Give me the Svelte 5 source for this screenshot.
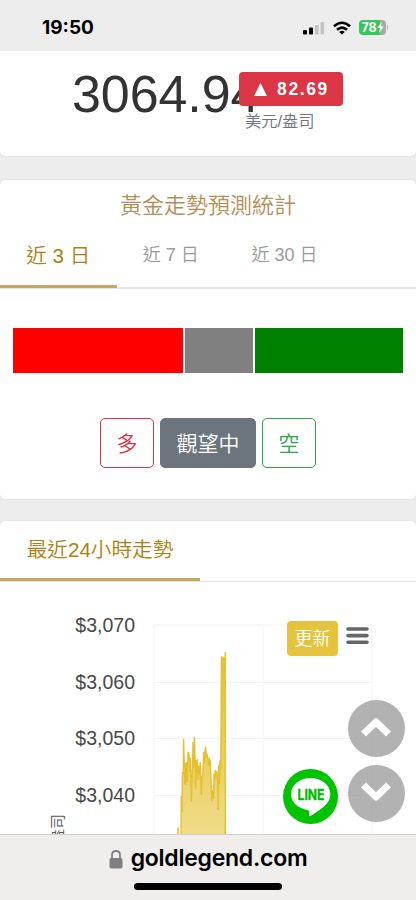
<script>
  const tabs = ['近 3 日', '近 7 日', '近 30 日'];
  let activeTab = 0;

  const segments = [
    { name: 'long', value: 170.5 },
    { name: 'wait', value: 69 },
    { name: 'short', value: 148.5 }
  ];

  const ticks = [
    { label: '$3,070', y: 43 },
    { label: '$3,060', y: 100.5 },
    { label: '$3,050', y: 156.5 },
    { label: '$3,040', y: 213.5 }
  ];

  const columns = [154, 263, 372];

  // price line, in chart units
  const prices = [
    [181, 258], [181.3, 214], [182, 230], [182.4, 190], [183.2, 192], [183.6, 157],
    [184.3, 182], [184.8, 202], [185.4, 181], [186, 203], [186.6, 180], [187.4, 200],
    [188, 170.5], [188.8, 171], [189.4, 178], [190, 190], [190.5, 176], [191.3, 220],
    [192, 199], [192.6, 184], [193, 160], [193.7, 186], [194.4, 154.5], [195, 175],
    [195.6, 207], [196.2, 178], [196.8, 190], [197.4, 177], [198.2, 198], [199, 184],
    [199.6, 193], [200.3, 180], [201.3, 213], [202, 197], [203, 190], [203.6, 170],
    [204.4, 182], [204.9, 169], [205.7, 165], [206.3, 176], [207, 172], [207.8, 176],
    [208.6, 184], [209.4, 177], [210.3, 179], [210.8, 193], [211.4, 203], [212, 219],
    [212.8, 208], [213.4, 217], [214, 192], [214.7, 198], [215.3, 188], [216, 195],
    [216.8, 189], [217.6, 200], [218.2, 228], [218.8, 183], [219.4, 202], [220, 178],
    [220.8, 188], [221.4, 75], [222.5, 76], [224, 76], [225, 90], [225.3, 70], [225.3, 258]
  ];

  const line = prices.map((p) => p.join(',')).join(' ');
</script>

<div class="phone">
  <header class="status">
    <span class="clock">19:50</span>
    <div class="status-icons">
      <svg width="22" height="14" viewBox="0 0 22 14" aria-hidden="true">
        <rect x="0" y="9" width="4" height="4.5" rx="1" />
        <rect x="6" y="6.5" width="4" height="7" rx="1" />
        <rect x="12" y="4" width="3.6" height="9.5" rx="1" fill="#c3c3c3" />
        <rect x="17.5" y="1" width="3.6" height="12.5" rx="1" fill="#c3c3c3" />
      </svg>
      <svg width="18" height="14" viewBox="0 0 18 14" fill="none" stroke="#000" stroke-width="2.6" aria-hidden="true">
        <path d="M1 5.3Q9-1.8 17 5.3" />
        <path d="M4 8.8Q9 4.4 14 8.8" />
        <path d="M9 13.6L6.2 10.9Q9 8.7 11.8 10.9Z" fill="#000" stroke="none" />
      </svg>
      <div class="battery">
        <span>78</span>
        <svg width="7" height="11" viewBox="0 0 7 11" aria-hidden="true">
          <path d="M4.5 0L.3 6H3L2 11L6.7 4.6H4Z" fill="#fff" />
        </svg>
      </div>
    </div>
  </header>

  <main>
    <section class="card price-card">
      <div class="price">3064.94</div>
      <div class="change">
        <span class="badge">
          <svg width="13" height="13" viewBox="0 0 13 13" aria-hidden="true">
            <path d="M6.5 0L13 13H0Z" fill="#fff" />
          </svg>
          82.69
        </span>
        <span class="unit">美元/盎司</span>
      </div>
    </section>

    <section class="card stats-card">
      <h2>黃金走勢預測統計</h2>
      <nav class="tabs">
        {#each tabs as tab, index (tab)}
          <button type="button" class="tab" class:active={index === activeTab} on:click={() => (activeTab = index)}>
            {tab}
          </button>
        {/each}
      </nav>
      <div class="ratio">
        {#each segments as segment (segment.name)}
          <div class={segment.name} style="flex-grow: {segment.value}"></div>
        {/each}
      </div>
      <div class="votes">
        <button type="button" class="vote red">多</button>
        <button type="button" class="vote grey">觀望中</button>
        <button type="button" class="vote green">空</button>
      </div>
    </section>

    <section class="card chart-card">
      <nav class="chart-tabs">
        <button type="button" class="chart-tab">最近24小時走勢</button>
      </nav>
      <div class="chart">
        <svg width="416" height="258" viewBox="0 0 416 258">
          <defs>
            <linearGradient id="gold" gradientUnits="userSpaceOnUse" x1="0" y1="70" x2="0" y2="258">
              <stop offset="0" stop-color="#e6c02e" />
              <stop offset="1" stop-color="#f0dc8c" />
            </linearGradient>
          </defs>
          <g stroke="#f3f3f3">
            {#each columns as x}
              <line x1={x} x2={x} y1="43" y2="258" />
            {/each}
            {#each ticks as tick}
              <line x1="154" x2="372" y1={tick.y} y2={tick.y} />
            {/each}
          </g>
          {#each ticks as tick}
            <text class="tick" x="135" y={tick.y + 6.5}>{tick.label}</text>
          {/each}
          <text class="axis" transform="translate(62.5 262) rotate(-90)">盎司</text>
          <polygon points="181,258 {line}" fill="url(#gold)" />
          <polyline points={line} fill="none" stroke="#e6c02e" stroke-width="1.4" />
          <path d="M178 258V245.5" stroke="#e6c02e" stroke-width="1.6" />
        </svg>
        <div class="tools">
          <button type="button" class="refresh">更新</button>
          <svg width="23" height="18" viewBox="0 0 23 18" stroke="#666" stroke-width="3.6" stroke-linecap="round" aria-hidden="true">
            <path d="M2 2H21M2 8.6H21M2 15.2H21" />
          </svg>
        </div>
      </div>
    </section>

    <div class="floating">
      <svg class="line-logo" width="55" height="55" viewBox="0 0 55 55">
        <circle cx="27.5" cy="27.5" r="27.5" fill="#00c300" />
        <path d="M27.5 9C16.5 9 8 16 8 25.2C8 33.6 15.5 39.4 24.5 41C26.5 41.5 26.5 42.5 26 46.5C26 47.3 26.7 47.3 27.3 46.9C33 43.7 40 39 43.8 34.5C46 31.8 47.3 28.8 47.3 25.2C47.3 16 38.5 9 27.5 9Z" fill="#fff" />
        <text x="28" y="30.5" text-anchor="middle" textLength="27" lengthAdjust="spacingAndGlyphs">LINE</text>
      </svg>
      <div class="scrollers">
        <button type="button" aria-label="Up">
          <svg width="32" height="22" viewBox="0 0 32 22" aria-hidden="true">
            <path d="M3.5 18L16 6L28.5 18" />
          </svg>
        </button>
        <button type="button" aria-label="Down">
          <svg width="32" height="22" viewBox="0 0 32 22" aria-hidden="true">
            <path d="M3.5 4L16 16L28.5 4" />
          </svg>
        </button>
      </div>
    </div>
  </main>

  <footer>
    <div class="address">
      <svg width="14" height="19" viewBox="0 0 14 19" aria-hidden="true">
        <path d="M3 9V5Q3 1 7 1T11 5V9" fill="none" stroke="#808082" stroke-width="1.8" />
        <rect x="0.5" y="8" width="13" height="10.6" rx="1.8" fill="#808082" />
      </svg>
      <span>goldlegend.com</span>
    </div>
    <div class="home-bar"></div>
  </footer>
</div>

<style>
  :global(body) {
    margin: 0;
    background: #ededed;
  }

  .phone {
    width: 416px;
    height: 900px;
    display: flex;
    flex-direction: column;
    overflow: hidden;
    background: #ededed;
    font-family: "Liberation Sans", "Noto Sans CJK TC", sans-serif;
    font-weight: 350;
    color: #333;
  }

  button {
    font: inherit;
    margin: 0;
    padding: 0;
    border: 0;
    background: none;
    box-sizing: border-box;
    white-space: nowrap;
  }

  svg {
    display: block;
    flex: none;
  }

  /* STATUS BAR */
  .status {
    flex: none;
    height: 51px;
    box-sizing: border-box;
    padding: 4px 28px 0 42px;
    display: flex;
    align-items: center;
    justify-content: space-between;
  }

  .clock {
    font-family: Inter, sans-serif;
    font-size: 19px;
    font-weight: 700;
    color: #000;
  }

  .status-icons {
    display: flex;
    align-items: center;
    gap: 8px;
  }

  .battery {
    position: relative;
    width: 27px;
    height: 15px;
    margin-right: 2px;
    display: flex;
    align-items: center;
    justify-content: center;
    border-radius: 4px;
    background: linear-gradient(90deg, #34c759 78%, #a9a9a9 78%);
    color: #fff;
    font: 700 12.5px/15px Inter, sans-serif;
  }

  .battery::after {
    content: '';
    position: absolute;
    right: -2px;
    top: 5px;
    width: 1.5px;
    height: 5px;
    border-radius: 0 2px 2px 0;
    background: #b5b5b5;
  }

  /* CARDS */
  main {
    position: relative;
    flex: 1;
    min-height: 0;
    overflow: hidden;
    display: flex;
    flex-direction: column;
  }

  .card {
    flex: none;
    box-sizing: border-box;
    background: #fff;
    border-radius: 5px;
    box-shadow: 0 0 2px rgba(0, 0, 0, 0.12);
  }

  .price-card {
    height: 105px;
    padding: 13px 0 0 72px;
    display: flex;
    align-items: flex-start;
    border-radius: 0 0 5px 5px;
  }

  .price {
    width: 167px;
    font-size: 52px;
    line-height: 60px;
    letter-spacing: -0.1px;
    white-space: nowrap;
  }

  .change {
    position: relative;
    padding-top: 8px;
    display: flex;
    flex-direction: column;
    align-items: flex-start;
  }

  .badge {
    box-sizing: border-box;
    width: 104px;
    height: 33.5px;
    padding: 2px 0 0 1px;
    display: flex;
    align-items: center;
    justify-content: center;
    gap: 10px;
    border-radius: 4px;
    background: #dc3545;
    color: #fff;
    font-size: 17.5px;
    font-weight: 700;
    letter-spacing: 1.6px;
  }

  .unit {
    margin: 3px 0 0 6px;
    color: #6c757d;
    font-size: 16.3px;
    line-height: 24px;
  }

  .stats-card {
    height: 319px;
    margin-top: 24px;
    display: flex;
    flex-direction: column;
  }

  h2 {
    margin: 0;
    padding-top: 10px;
    text-align: center;
    color: #b58d56;
    font-size: 22px;
    font-weight: 350;
    line-height: 32px;
  }

  .tabs {
    display: flex;
    height: 67px;
    box-sizing: border-box;
    border-bottom: 2px solid #e6e6e6;
  }

  .tab {
    height: 66px;
    padding: 0 26.3px 5px;
    color: #999;
    font-size: 18px;
  }

  .tab.active {
    width: 116.5px;
    padding: 0;
    border-bottom: 3px solid #c6a662;
    color: #ad8010;
    font-size: 20.5px;
  }

  .ratio {
    display: flex;
    gap: 1.5px;
    height: 45px;
    margin: 39px 13px 0;
  }

  .ratio div {
    flex-basis: 0;
  }

  .long {
    background: #f00;
  }

  .wait {
    background: #808080;
  }

  .short {
    background: #008000;
  }

  .votes {
    display: flex;
    justify-content: center;
    gap: 6px;
    margin-top: 45px;
  }

  .vote {
    width: 54px;
    height: 50px;
    padding-bottom: 3px;
    border: 1.5px solid;
    border-radius: 5px;
    font-size: 21px;
  }

  .red {
    color: #dc3545;
  }

  .grey {
    width: 96px;
    border-color: #6c757d;
    background: #6c757d;
    color: #fff;
  }

  .green {
    color: #28a745;
  }

  /* CHART */
  .chart-card {
    height: 330px;
    margin-top: 22px;
  }

  .chart-tabs {
    height: 61px;
    box-sizing: border-box;
    border-bottom: 1px solid #e2e2e2;
  }

  .chart-tab {
    width: 200px;
    height: 60px;
    padding-bottom: 4px;
    border-bottom: 3px solid #c6a662;
    color: #ad8010;
    font-size: 20.6px;
  }

  .chart {
    position: relative;
  }

  .tick {
    fill: #484848;
    font-size: 19.5px;
    text-anchor: end;
  }

  .axis {
    fill: #555;
    font-size: 15px;
  }

  .tools {
    position: absolute;
    top: 39px;
    left: 287px;
    display: flex;
    gap: 8px;
  }

  .tools svg {
    margin-top: 6px;
  }

  .refresh {
    width: 51px;
    height: 35px;
    padding-bottom: 4px;
    border-radius: 4px;
    background: #e5c33c;
    color: #fff;
    font-size: 18px;
  }

  /* FLOATING BUTTONS */
  .floating {
    position: absolute;
    right: 11.5px;
    bottom: 12px;
    display: flex;
    align-items: flex-end;
    gap: 9.5px;
  }

  .line-logo {
    margin-bottom: -2px;
  }

  .line-logo text {
    fill: #00b900;
    stroke: #00b900;
    stroke-width: 0.3px;
    font-family: Inter, sans-serif;
    font-size: 14px;
    font-weight: 700;
  }

  .scrollers {
    display: flex;
    flex-direction: column;
    gap: 8px;
  }

  .scrollers button {
    width: 57px;
    height: 57px;
    display: grid;
    place-items: center;
    padding-bottom: 3px;
    border-radius: 50%;
    background: rgba(138, 138, 138, 0.66);
  }

  .scrollers path {
    fill: none;
    stroke: #fff;
    stroke-width: 7;
    stroke-linejoin: round;
  }

  /* BROWSER BAR */
  footer {
    flex: none;
    height: 66px;
    box-sizing: border-box;
    border-top: 1px solid #cfcfcf;
    background: #efeeed;
    display: flex;
    flex-direction: column;
    align-items: center;
  }

  .address {
    display: flex;
    align-items: center;
    gap: 8px;
    height: 48px;
    color: #000;
    font: 600 23px/46px Inter, sans-serif;
    letter-spacing: -0.25px;
  }

  .address span {
    padding-bottom: 2px;
  }

  .home-bar {
    width: 148px;
    height: 6.5px;
    border-radius: 4px;
    background: #000;
  }
</style>
